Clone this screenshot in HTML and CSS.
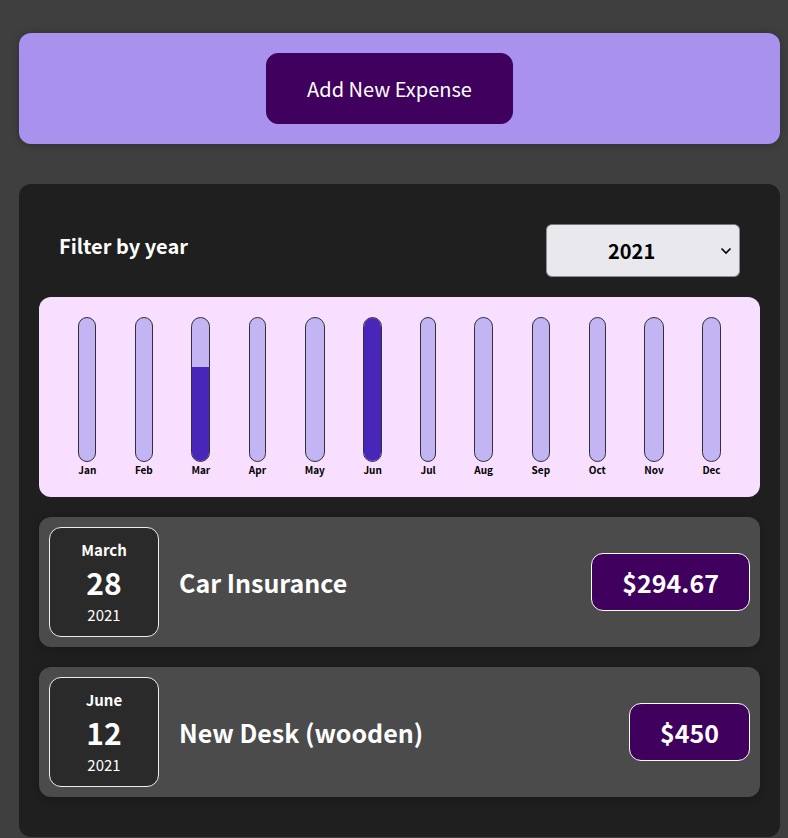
FILE: index.html
```html
<!DOCTYPE html>
<html lang="en">
<head>
<meta charset="utf-8">
<title>Expenses</title>
<link rel="stylesheet" href="styles.css">
</head>
<body>
<div class="new-expense">
  <button class="new-expense__btn">Add New Expense</button>
</div>
<div class="expenses">
  <div class="expenses-filter">
    <div class="expenses-filter__control">
      <label>Filter by year</label>
      <select>
        <option>2022</option>
        <option selected>2021</option>
        <option>2020</option>
        <option>2019</option>
      </select>
    </div>
  </div>
  <div class="chart">
    <div class="chart-bar"><div class="chart-bar__inner"><div class="chart-bar__fill" style="height:0%"></div></div><div class="chart-bar__label">Jan</div></div>
    <div class="chart-bar"><div class="chart-bar__inner"><div class="chart-bar__fill" style="height:0%"></div></div><div class="chart-bar__label">Feb</div></div>
    <div class="chart-bar"><div class="chart-bar__inner"><div class="chart-bar__fill" style="height:65.48%"></div></div><div class="chart-bar__label">Mar</div></div>
    <div class="chart-bar"><div class="chart-bar__inner"><div class="chart-bar__fill" style="height:0%"></div></div><div class="chart-bar__label">Apr</div></div>
    <div class="chart-bar"><div class="chart-bar__inner"><div class="chart-bar__fill" style="height:0%"></div></div><div class="chart-bar__label">May</div></div>
    <div class="chart-bar"><div class="chart-bar__inner"><div class="chart-bar__fill" style="height:100%"></div></div><div class="chart-bar__label">Jun</div></div>
    <div class="chart-bar"><div class="chart-bar__inner"><div class="chart-bar__fill" style="height:0%"></div></div><div class="chart-bar__label">Jul</div></div>
    <div class="chart-bar"><div class="chart-bar__inner"><div class="chart-bar__fill" style="height:0%"></div></div><div class="chart-bar__label">Aug</div></div>
    <div class="chart-bar"><div class="chart-bar__inner"><div class="chart-bar__fill" style="height:0%"></div></div><div class="chart-bar__label">Sep</div></div>
    <div class="chart-bar"><div class="chart-bar__inner"><div class="chart-bar__fill" style="height:0%"></div></div><div class="chart-bar__label">Oct</div></div>
    <div class="chart-bar"><div class="chart-bar__inner"><div class="chart-bar__fill" style="height:0%"></div></div><div class="chart-bar__label">Nov</div></div>
    <div class="chart-bar"><div class="chart-bar__inner"><div class="chart-bar__fill" style="height:0%"></div></div><div class="chart-bar__label">Dec</div></div>
  </div>
  <ul class="expenses-list">
    <li class="expense-item">
      <div class="expense-date">
        <div class="expense-date__month">March</div>
        <div class="expense-date__day">28</div>
        <div class="expense-date__year">2021</div>
      </div>
      <div class="expense-item__description">
        <h2>Car Insurance</h2>
        <div class="expense-item__price">$294.67</div>
      </div>
    </li>
    <li class="expense-item">
      <div class="expense-date">
        <div class="expense-date__month">June</div>
        <div class="expense-date__day">12</div>
        <div class="expense-date__year">2021</div>
      </div>
      <div class="expense-item__description">
        <h2>New Desk (wooden)</h2>
        <div class="expense-item__price">$450</div>
      </div>
    </li>
  </ul>
</div>
</body>
</html>
```

FILE: styles.css
```css
* {
  box-sizing: border-box;
}

html {
  font-size: 20px;
  font-family: "Noto Sans CJK JP", "Noto Sans", sans-serif;
}

body {
  margin: 0;
  padding-top: 33px;
  background-color: #3f3f3f;
}

.new-expense {
  background-color: #a892ee;
  padding: 1rem;
  margin: 0 0 40px 19px;
  width: 761px;
  border-radius: 12px;
  text-align: center;
  box-shadow: 0 1px 8px rgba(0, 0, 0, 0.25);
}

.new-expense__btn {
  font: inherit;
  cursor: pointer;
  padding: 1rem 2rem;
  border: 1px solid #40005d;
  background-color: #40005d;
  color: white;
  border-radius: 12px;
  margin-right: 1rem;
}

.expenses {
  padding: 1rem;
  background-color: rgb(31, 31, 31);
  margin: 0 0 0 19px;
  width: 761px;
  border-radius: 12px;
}

.expenses-filter {
  color: white;
  padding: 0 1rem;
}

.expenses-filter__control {
  display: flex;
  width: 100%;
  align-items: center;
  justify-content: space-between;
  margin: 1rem 0;
}

.expenses-filter label {
  font-weight: bold;
  margin-bottom: 0.5rem;
}

.expenses-filter select {
  -webkit-appearance: none;
  appearance: none;
  font: inherit;
  font-weight: bold;
  color: #000;
  width: 194px;
  height: 53px;
  padding: 0 60px 0 61px;
  border: 1px solid #8d8d95;
  border-top-color: #767676;
  border-radius: 6px;
  background-color: #e9e8ed;
  background-image: url("data:image/svg+xml,%3Csvg xmlns='http://www.w3.org/2000/svg' width='12' height='8' viewBox='0 0 12 8'%3E%3Cpath d='M1.5 1.5 L6 6 L10.5 1.5' fill='none' stroke='%23000' stroke-width='1.6'/%3E%3C/svg%3E");
  background-repeat: no-repeat;
  background-position: right 7px center;
  background-size: 12px 8px;
}

.chart {
  padding: 1rem;
  border-radius: 12px;
  background-color: #f8dfff;
  text-align: center;
  display: flex;
  justify-content: space-around;
  height: 10rem;
}

.chart-bar {
  height: 100%;
  display: flex;
  flex-direction: column;
  align-items: center;
}

.chart-bar__inner {
  height: 100%;
  width: 100%;
  border: 1px solid #313131;
  border-radius: 12px;
  background-color: #c3b4f3;
  overflow: hidden;
  display: flex;
  flex-direction: column;
  justify-content: flex-end;
}

.chart-bar__fill {
  background-color: #4826b9;
  width: 100%;
}

.chart-bar__label {
  font-weight: bold;
  font-size: 0.5rem;
  text-align: center;
}

.expenses-list {
  list-style: none;
  padding: 0;
  margin: 0;
}

.expense-item {
  display: flex;
  justify-content: space-between;
  align-items: center;
  box-shadow: 0 2px 8px rgba(0, 0, 0, 0.25);
  padding: 0.5rem;
  margin: 1rem 0;
  border-radius: 12px;
  background-color: #4b4b4b;
}

.expense-date {
  display: flex;
  flex-direction: column;
  width: 5.5rem;
  height: 5.5rem;
  border: 1px solid #ececec;
  background-color: #2a2a2a;
  color: white;
  border-radius: 12px;
  align-items: center;
  justify-content: center;
}

.expense-date__month {
  font-size: 0.75rem;
  font-weight: bold;
}

.expense-date__year {
  font-size: 0.75rem;
}

.expense-date__day {
  font-size: 1.5rem;
  font-weight: bold;
}

.expense-item__description {
  display: flex;
  flex-direction: row;
  align-items: center;
  justify-content: flex-start;
  flex: 1;
}

.expense-item h2 {
  font-size: 1.25rem;
  flex: 1;
  margin: 0 1rem;
  color: white;
}

.expense-item__price {
  font-size: 1.25rem;
  font-weight: bold;
  color: white;
  background-color: #40005d;
  border: 1px solid white;
  padding: 0.5rem 1.5rem;
  border-radius: 12px;
}
```
